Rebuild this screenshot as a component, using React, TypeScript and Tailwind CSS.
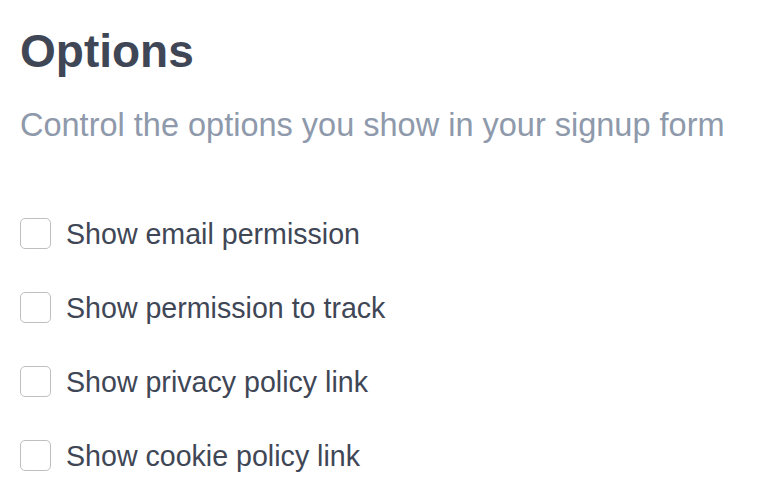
import React, { useState } from 'react';

const options = [
  'Show email permission',
  'Show permission to track',
  'Show privacy policy link',
  'Show cookie policy link',
];

const App: React.FC = () => {
  const [checked, setChecked] = useState<boolean[]>(options.map(() => false));

  const toggle = (i: number) => {
    setChecked(prev => prev.map((v, idx) => (idx === i ? !v : v)));
  };

  return (
    <div className="min-h-screen bg-white pl-5 pt-[28px] font-['Liberation_Sans',Arial,sans-serif]">
      <h1 className="text-[46px] leading-[46px] font-bold text-[#3f4756]">Options</h1>
      <p className="mt-[35px] text-[32.5px] leading-[32px] text-[#8e99ab]">
        Control the options you show in your signup form
      </p>

      <div className="mt-[77px] flex flex-col gap-[43px]">
        {options.map((label, i) => (
          <label key={label} className="flex items-center gap-[15px] cursor-pointer">
            <input
              type="checkbox"
              checked={checked[i]}
              onChange={() => toggle(i)}
              className="sr-only"
            />
            <span className="w-[31px] h-[31px] rounded-[5px] border-[1.5px] border-[#bfbfbf] bg-white" />
            <span className="text-[28.6px] leading-[28px] text-[#3f4756]">{label}</span>
          </label>
        ))}
      </div>
    </div>
  );
};

export default App;
